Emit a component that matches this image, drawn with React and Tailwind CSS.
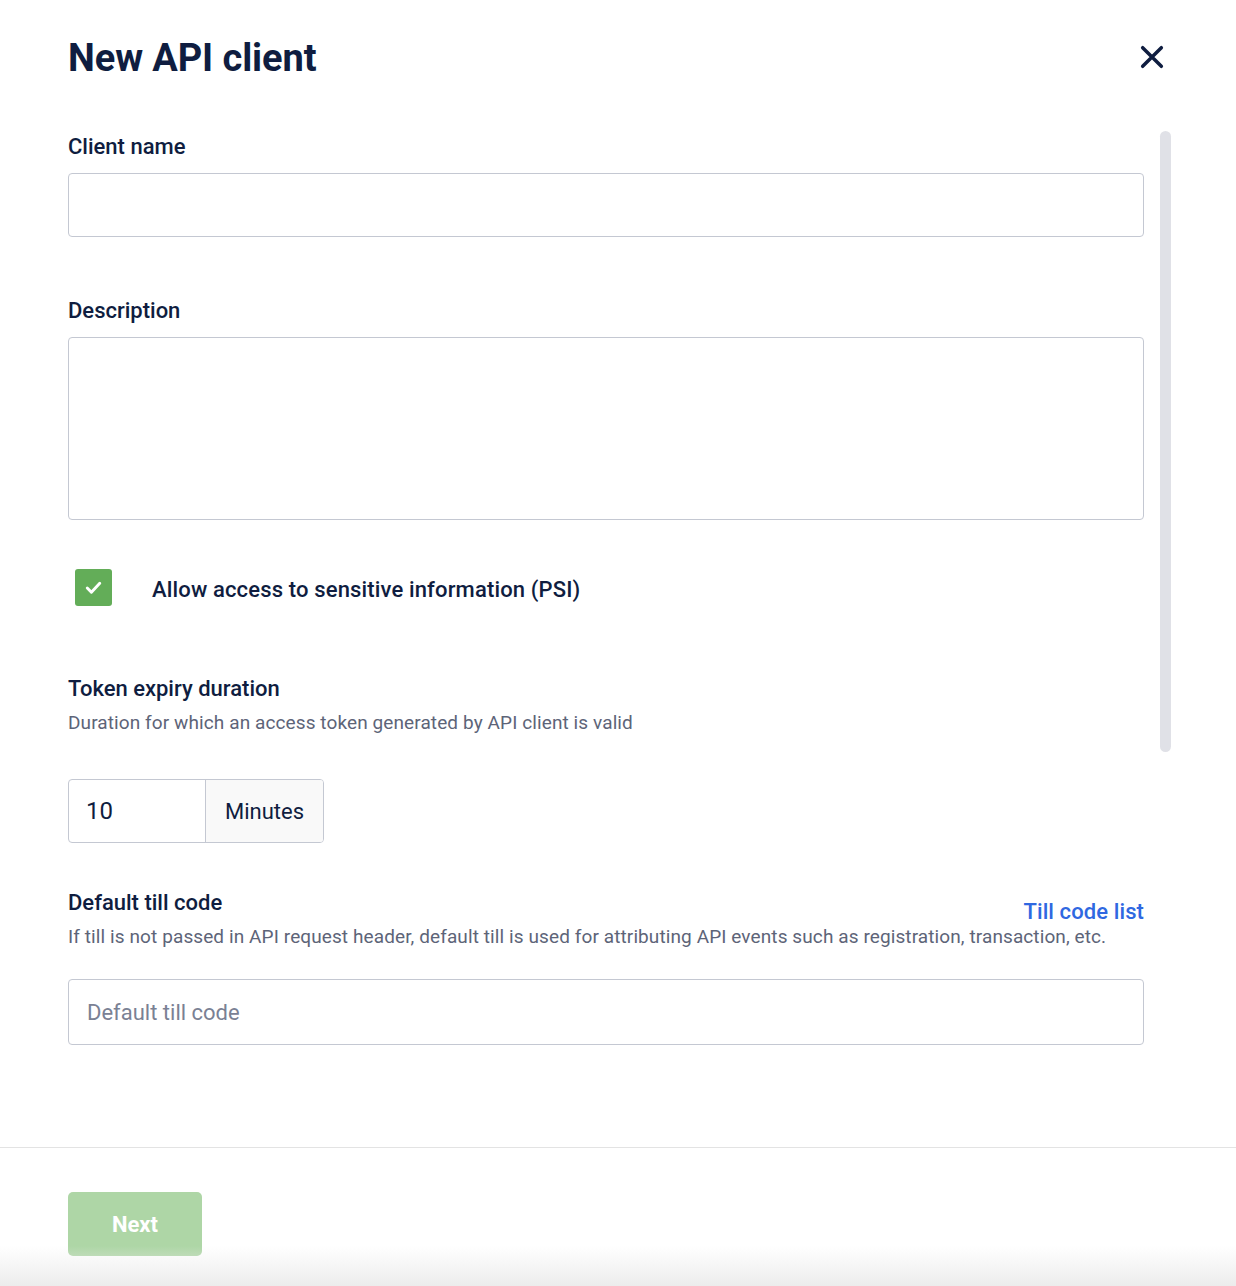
import React, { useState } from "react";

export default function App() {
  const [psi, setPsi] = useState(true);

  return (
    <div className="relative w-[1236px] h-[1286px] bg-white overflow-hidden text-[#0f1d40]" style={{ fontFamily: "Roboto, 'Liberation Sans', sans-serif" }}>
      {/* Header */}
      <div className="flex items-center justify-between pl-[68px] pr-[68px] pt-[34px] h-[98px]">
        <h1 className="text-[38px] font-bold leading-none tracking-[-0.1px] -mt-[16px]">New API client</h1>
        <button className="-mt-[18px] mr-[2px]">
          <svg width="28" height="28" viewBox="0 0 24 24" fill="none" stroke="#0f1d40" strokeWidth="3" strokeLinecap="round">
            <path d="M4 4l16 16M20 4L4 20" />
          </svg>
        </button>
      </div>

      {/* Scrollable body */}
      <div className="relative h-[1049px]">
        <div className="absolute left-[1160px] top-[33px] w-[11px] h-[621px] rounded-full bg-[#e0e1e7]" />

        <div className="pl-[68px] pr-[92px] pt-[38px]">
          <label className="block text-[22px] font-medium leading-none">Client name</label>
          <input className="mt-[15px] block w-full h-[64px] rounded-[4px] border border-[#c4c8d2] px-[18px] text-[22px] outline-none" />

          <label className="block mt-[63px] text-[22px] font-medium leading-none">Description</label>
          <textarea className="mt-[15px] block w-full h-[183px] rounded-[4px] border border-[#c4c8d2] px-[18px] py-[14px] text-[22px] outline-none resize-none" />

          <div className="flex items-center mt-[49px] h-[37px]">
            <button
              onClick={() => setPsi(!psi)}
              className="ml-[7px] w-[37px] h-[37px] rounded-[3px] bg-[#63ad58] flex items-center justify-center"
            >
              {psi && (
                <svg width="25" height="25" viewBox="0 0 24 24" fill="none" stroke="white" strokeWidth="2.8" strokeLinecap="round" strokeLinejoin="round">
                  <path d="M6 12.5l4 4L18 8" />
                </svg>
              )}
            </button>
            <span className="ml-[40px] mt-[4px] text-[22px] font-medium tracking-[0.15px]">Allow access to sensitive information (PSI)</span>
          </div>

          <label className="block mt-[72px] text-[22px] font-medium leading-none">Token expiry duration</label>
          <p className="mt-[13px] text-[19px] leading-none tracking-[0.1px] text-[#5d6478]">Duration for which an access token generated by API client is valid</p>

          <div className="mt-[47px] flex w-[256px] h-[64px] rounded-[4px] border border-[#c4c8d2] overflow-hidden">
            <input defaultValue="10" className="w-[137px] px-[17px] text-[24px] outline-none border-r border-[#c4c8d2]" />
            <div className="flex-1 bg-[#f9f9f9] flex items-center justify-center text-[22px]">Minutes</div>
          </div>

          <div className="relative mt-[49px]">
            <label className="block text-[22px] font-medium leading-none">Default till code</label>
            <a href="#" className="absolute right-0 top-[9px] text-[22px] font-medium text-[#2f68e1] leading-none tracking-[0.1px]">Till code list</a>
            <p className="mt-[13px] text-[19px] leading-none tracking-[0.1px] text-[#5d6478]">If till is not passed in API request header, default till is used for attributing API events such as registration, transaction, etc.</p>
          </div>

          <input placeholder="Default till code" className="mt-[33px] block w-full h-[66px] rounded-[4px] border border-[#c4c8d2] px-[18px] text-[22px] outline-none placeholder:text-[#7a8194]" />
        </div>
      </div>

      {/* Footer */}
      <div className="border-t border-[#e3e3e3] pl-[68px] pt-[44px]">
        <button disabled className="w-[134px] h-[64px] rounded-[5px] bg-[#aed6a6] text-white text-[22px] font-bold">Next</button>
      </div>
      <div className="absolute left-0 right-0 bottom-0 h-[40px] bg-gradient-to-b from-white/0 to-[#ececec]" />
    </div>
  );
}
